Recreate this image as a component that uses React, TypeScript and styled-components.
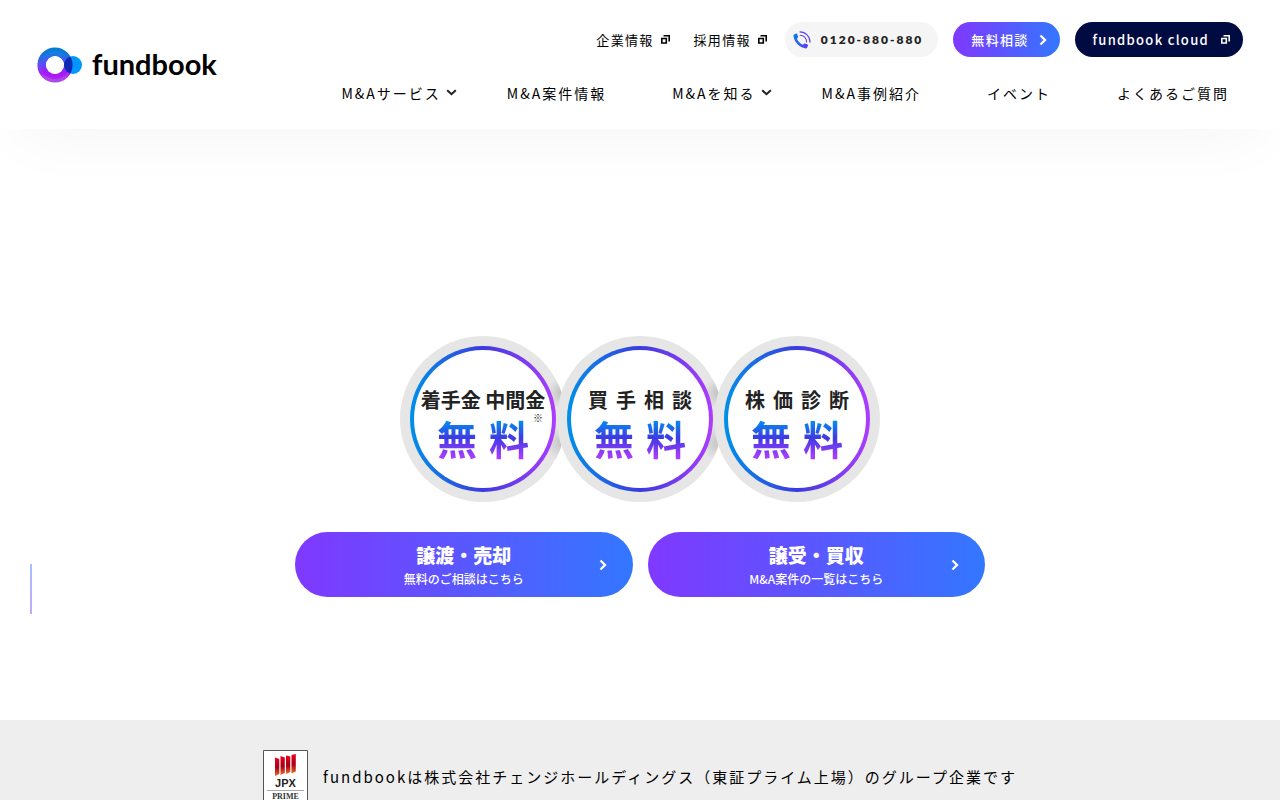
import React from "react";
import styled, { createGlobalStyle } from "styled-components";

const GlobalStyle = createGlobalStyle`
  * { box-sizing: border-box; }
  body {
    margin: 0;
    background: #fff;
    color: #000;
    font-family: "Noto Sans CJK JP", "Noto Sans", sans-serif;
    font-weight: 400;
  }
  a { color: inherit; text-decoration: none; }
`;

const brandGradient = "linear-gradient(90deg, #8038ff, #3377ff)";

const Header = styled.header`
  position: relative;
  display: flex;
  align-items: center;
  justify-content: space-between;
  padding: 22px 37px 26px;
  background: #fff;
  box-shadow: 0 30px 60px -20px rgba(0, 0, 0, 0.04);
`;

const Logo = styled.a`
  display: flex;
  align-items: center;
  gap: 9px;
  padding-top: 4px;
`;

const Wordmark = styled.span`
  font: 700 29px/34px Lato, sans-serif;
  padding-bottom: 2px;
`;

const HeaderMenus = styled.div`
  display: flex;
  flex-direction: column;
  align-items: flex-end;
  gap: 26px;
`;

const UtilityRow = styled.div`
  display: flex;
  align-items: center;
  gap: 15px;
  font-size: 13px;
  line-height: 20px;
  letter-spacing: 0.1em;
`;

const UtilityLinks = styled.div`
  display: flex;
  gap: 24px;
  padding-right: 3px;
`;

const UtilityLink = styled.a`
  display: flex;
  align-items: center;
  gap: 5px;
`;

const Pill = styled.a<{ $background: string; $color?: string }>`
  display: flex;
  align-items: center;
  gap: 10px;
  height: 35px;
  padding: 0 13px 0 18px;
  border-radius: 18px;
  background: ${(p) => p.$background};
  color: ${(p) => p.$color ?? "#fff"};
  font-weight: 500;
`;

const PhonePill = styled(Pill)`
  padding: 0 15px 0 8px;
  font-family: Lato, sans-serif;
  font-size: 12px;
  font-weight: 800;
  letter-spacing: 2px;
`;

const MainNav = styled.nav`
  display: flex;
  padding-right: 14px;
  font-size: 14px;
  line-height: 20px;
  letter-spacing: 2px;
`;

const NavItem = styled.a<{ $menu?: boolean }>`
  display: flex;
  align-items: center;
  gap: 5px;
  margin-right: ${(p) => (p.$menu ? "50px" : "66px")};
  &:last-child { margin-right: 0; }
`;

const Hero = styled.section`
  position: relative;
  display: flex;
  flex-direction: column;
  align-items: center;
  gap: 30px;
  padding: 207px 20px 123px;
`;

const ScrollLine = styled.span`
  position: absolute;
  left: 30px;
  bottom: 106px;
  width: 2px;
  height: 50px;
  background: linear-gradient(#a6c0ff, #c3a5ff);
`;

const Badges = styled.ul`
  display: flex;
  margin: 0;
  padding: 0;
  list-style: none;
`;

const Badge = styled.li`
  width: 166px;
  height: 166px;
  padding: 10px;
  border-radius: 50%;
  background: #e6e6e6;
  & + & { margin-left: -9px; }
  &:not(:last-child) {
    background:
      radial-gradient(circle at 163px 57px, #bdbdbd, transparent 16px),
      radial-gradient(circle at 162px 107px, #c4c4c4, transparent 18px),
      #e6e6e6;
  }
`;

const BadgeRing = styled.div`
  display: flex;
  flex-direction: column;
  align-items: center;
  height: 146px;
  padding-top: 38px;
  border: 4px solid transparent;
  border-radius: 50%;
  background:
    linear-gradient(#fff, #fff) padding-box,
    linear-gradient(90deg, #0090e8, #3b3be0 50%, #ae3cff) border-box;
`;

const BadgeTitle = styled.span<{ $wide?: boolean }>`
  color: #222;
  font-size: 20px;
  font-weight: 700;
  line-height: 24px;
  white-space: nowrap;
  letter-spacing: ${(p) => (p.$wide ? "8px" : "0")};
  margin-right: ${(p) => (p.$wide ? "-8px" : "0")};
`;

const BadgeFree = styled.strong`
  position: relative;
  margin-right: -12px;
  font-size: 40px;
  font-weight: 700;
  line-height: 52px;
  letter-spacing: 12px;
  color: transparent;
  background: linear-gradient(#0090f0 16%, #3d3be2 50%, #a63cff 86%);
  background-clip: text;
`;

const NoteMark = styled.small`
  position: absolute;
  top: 0;
  right: -2px;
  color: #222;
  font-size: 10px;
  font-weight: 400;
  line-height: 12px;
  letter-spacing: 0;
`;

const Actions = styled.div`
  display: grid;
  grid-template-columns: 1fr 1fr;
  gap: 15px;
  width: 100%;
  max-width: 690px;
`;

const Action = styled.a`
  display: grid;
  grid-template-columns: 1fr auto 1fr;
  align-items: center;
  height: 65px;
  padding: 0 26px;
  border-radius: 33px;
  background: ${brandGradient};
  color: #fff;
  text-align: center;
  svg { justify-self: end; }
`;

const ActionText = styled.span`
  grid-column: 2;
  display: flex;
  flex-direction: column;
  font-size: 12px;
  font-weight: 500;
  line-height: 20px;
  strong {
    font-size: 19px;
    font-weight: 900;
    line-height: 28px;
  }
`;

const GroupBar = styled.section`
  display: flex;
  align-items: center;
  justify-content: center;
  gap: 15px;
  padding: 30px 20px;
  background: #eee;
  font-size: 15px;
  line-height: 24px;
  letter-spacing: 2px;
  p { margin: 0; }
`;

const LogoIcon = () => (
  <svg width="46" height="38" viewBox="0 0 46 38" aria-hidden="true">
    <defs>
      <linearGradient id="ring" x1="0" y1="0" x2="0" y2="1">
        <stop offset="0" stopColor="#087bd5" />
        <stop offset=".5" stopColor="#5952f4" />
        <stop offset=".8" stopColor="#a920f5" />
        <stop offset="1" stopColor="#a84be6" />
      </linearGradient>
      <linearGradient id="ringInner" x1="0" y1="0" x2="0" y2="1">
        <stop offset="0" stopColor="#187fe8" />
        <stop offset="1" stopColor="#b900ff" />
      </linearGradient>
      <clipPath id="ringClip"><circle cx="18" cy="19" r="17.5" /></clipPath>
    </defs>
    <circle cx="36" cy="19" r="9" fill="#0098ff" />
    <circle cx="18" cy="19" r="13.2" fill="none" stroke="url(#ring)" strokeWidth="8.8" />
    <circle cx="18" cy="19" r="11.5" fill="none" stroke="url(#ringInner)" strokeWidth="5" opacity=".6" />
    <circle cx="36" cy="19" r="9" fill="#0b2bb5" clipPath="url(#ringClip)" />
    <circle cx="18" cy="19" r="9" fill="#fff" />
  </svg>
);

const ExternalIcon = () => (
  <svg width="11" height="11" viewBox="0 0 11 11" fill="none" stroke="currentColor" strokeWidth="1.6" aria-hidden="true">
    <path d="M2.800 4.500h4.500v4.500H2.800zM4.500 1.800h5.700v5.700" />
  </svg>
);

const Chevron = () => (
  <svg width="8" height="12" viewBox="0 0 8 12" fill="none" stroke="currentColor" strokeWidth="2.3" aria-hidden="true">
    <path d="M1.500 1.500 6 6 1.500 10.500" />
  </svg>
);

const MenuArrow = () => (
  <svg width="11" height="8" viewBox="0 0 11 8" fill="none" stroke="#222" strokeWidth="2" aria-hidden="true">
    <path d="m1.200 1.200 4.300 4 4.300-4" />
  </svg>
);

const PhoneIcon = () => (
  <svg width="18" height="18" viewBox="0 0 18 18" aria-hidden="true">
    <defs>
      <linearGradient id="phone" x1="0" y1="0" x2="1" y2="1">
        <stop offset="0" stopColor="#087cf0" />
        <stop offset=".5" stopColor="#2f62f2" />
        <stop offset="1" stopColor="#6535f0" />
      </linearGradient>
    </defs>
    <path fill="url(#phone)" d="M1 3.600 3 2.600c.6-.2 1 0 1.200.5l.9 2.600c.1.4 0 .7-.3 1L3.900 7.800c1.300 2.700 3.300 4.700 6 6l1.100-1.100c.3-.3.7-.4 1.100-.2l2.500 1.100c.5.2.7.7.4 1.200l-1 2c-.3.5-.8.7-1.400.6C6.300 16.300 1.500 11.500.5 5.200.4 4.500.5 3.900 1 3.600z" />
    <path fill="none" stroke="#5b45f0" strokeWidth="1.100" strokeLinecap="round" d="M7 .9c5.300 0 10.200 4.700 10 10.400M7.100 4.200c3.600.1 6.500 3.100 6.500 6.700" />
  </svg>
);

const JpxLogo = () => (
  <svg width="45" height="54" viewBox="0 0 45 54" role="img" aria-label="JPX PRIME">
    <defs>
      <linearGradient id="jpx" x1="0" y1="0" x2="0" y2="1">
        <stop offset="0" stopColor="#e60020" />
        <stop offset=".55" stopColor="#a80018" />
        <stop offset="1" stopColor="#ef6a26" />
      </linearGradient>
    </defs>
    <path d="M.5.5h44v53H.5z" fill="#fff" stroke="#555" />
    <g fill="url(#jpx)">
      <path d="m12 7.500 4.300 1.500v15l-4.300 2z" />
      <path d="m17.500 6 4.300 1.500v15.500l-4.300 2z" />
      <path d="m23 5.500 4.300 1v15.500l-4.300 2z" />
      <path d="m28.500 5 4.300-1v17.500l-4.300 2z" />
    </g>
    <text x="22.5" y="37" textAnchor="middle" fontFamily="Liberation Sans, sans-serif" fontWeight="700" fontSize="11" fill="#222" letterSpacing="0">JPX</text>
    <path d="M4 40.500h37" stroke="#aaa" />
    <text x="22.5" y="49" textAnchor="middle" fontFamily="Liberation Serif, serif" fontWeight="700" fontSize="8" fill="#333" letterSpacing="0">PRIME</text>
  </svg>
);

const navItems = [
  { label: "M&Aサービス", menu: true },
  { label: "M&A案件情報" },
  { label: "M&Aを知る", menu: true },
  { label: "M&A事例紹介" },
  { label: "イベント" },
  { label: "よくあるご質問" },
];

const badges = [
  { title: "着手金 中間金", note: true },
  { title: "買手相談" },
  { title: "株価診断" },
];

const actions = [
  { title: "譲渡・売却", text: "無料のご相談はこちら" },
  { title: "譲受・買収", text: "M&A案件の一覧はこちら" },
];

export default function App() {
  return (
    <>
      <GlobalStyle />
      <Header>
        <Logo href="#">
          <LogoIcon />
          <Wordmark>fundbook</Wordmark>
        </Logo>
        <HeaderMenus>
          <UtilityRow>
            <UtilityLinks>
              <UtilityLink href="#">企業情報<ExternalIcon /></UtilityLink>
              <UtilityLink href="#">採用情報<ExternalIcon /></UtilityLink>
            </UtilityLinks>
            <PhonePill href="tel:0120880880" $background="#f5f5f5" $color="#222">
              <PhoneIcon />0120-880-880
            </PhonePill>
            <Pill href="#" $background={brandGradient}>無料相談<Chevron /></Pill>
            <Pill href="#" $background="#000b41">fundbook cloud<ExternalIcon /></Pill>
          </UtilityRow>
          <MainNav>
            {navItems.map((item) => (
              <NavItem key={item.label} href="#" $menu={item.menu}>
                {item.label}
                {item.menu && <MenuArrow />}
              </NavItem>
            ))}
          </MainNav>
        </HeaderMenus>
      </Header>
      <main>
        <Hero>
          <ScrollLine />
          <Badges>
            {badges.map((badge) => (
              <Badge key={badge.title}>
                <BadgeRing>
                  <BadgeTitle $wide={!badge.note}>{badge.title}</BadgeTitle>
                  <BadgeFree>
                    無料
                    {badge.note && <NoteMark>※</NoteMark>}
                  </BadgeFree>
                </BadgeRing>
              </Badge>
            ))}
          </Badges>
          <Actions>
            {actions.map((action) => (
              <Action key={action.title} href="#">
                <ActionText>
                  <strong>{action.title}</strong>
                  {action.text}
                </ActionText>
                <Chevron />
              </Action>
            ))}
          </Actions>
        </Hero>
        <GroupBar>
          <JpxLogo />
          <p>fundbookは株式会社チェンジホールディングス（東証プライム上場）のグループ企業です</p>
        </GroupBar>
      </main>
    </>
  );
}
